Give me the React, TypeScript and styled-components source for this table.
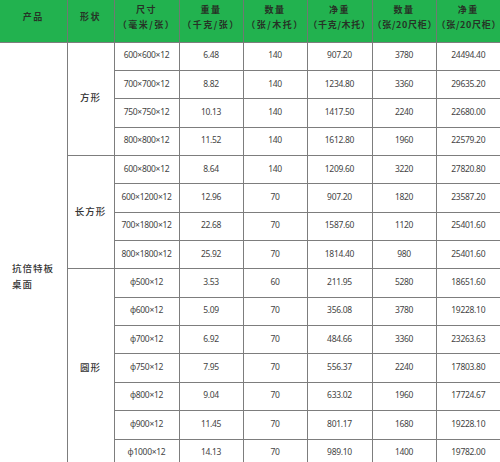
import React from 'react'
import styled, { createGlobalStyle } from 'styled-components'

const GlobalStyle = createGlobalStyle`
  html, body {
    margin: 0;
    padding: 0;
    background: #ffffff;
  }
  body {
    font-family: "Noto Sans", "Noto Sans CJK SC", sans-serif;
  }
`

type Row = [string, string, string, string, string, string]

interface Group {
  shape: string
  rows: Row[]
}

const headers: { top: string; bottom?: string }[] = [
  { top: '产品' },
  { top: '形状' },
  { top: '尺寸', bottom: '（毫米/张）' },
  { top: '重量', bottom: '（千克/张）' },
  { top: '数量', bottom: '（张/木托）' },
  { top: '净重', bottom: '（千克/木托）' },
  { top: '数量', bottom: '（张/20尺柜）' },
  { top: '净重', bottom: '（张/20尺柜）' },
]

const groups: Group[] = [
  {
    shape: '方形',
    rows: [
      ['600×600×12', '6.48', '140', '907.20', '3780', '24494.40'],
      ['700×700×12', '8.82', '140', '1234.80', '3360', '29635.20'],
      ['750×750×12', '10.13', '140', '1417.50', '2240', '22680.00'],
      ['800×800×12', '11.52', '140', '1612.80', '1960', '22579.20'],
    ],
  },
  {
    shape: '长方形',
    rows: [
      ['600×800×12', '8.64', '140', '1209.60', '3220', '27820.80'],
      ['600×1200×12', '12.96', '70', '907.20', '1820', '23587.20'],
      ['700×1800×12', '22.68', '70', '1587.60', '1120', '25401.60'],
      ['800×1800×12', '25.92', '70', '1814.40', '980', '25401.60'],
    ],
  },
  {
    shape: '圆形',
    rows: [
      ['φ500×12', '3.53', '60', '211.95', '5280', '18651.60'],
      ['φ600×12', '5.09', '70', '356.08', '3780', '19228.10'],
      ['φ700×12', '6.92', '70', '484.66', '3360', '23263.63'],
      ['φ750×12', '7.95', '70', '556.37', '2240', '17803.80'],
      ['φ800×12', '9.04', '70', '633.02', '1960', '17724.67'],
      ['φ900×12', '11.45', '70', '801.17', '1680', '19228.10'],
      ['φ1000×12', '14.13', '70', '989.10', '1400', '19782.00'],
    ],
  },
]

const colWidths = [67, 47, 65, 64, 64, 65, 64, 64]
const totalRows = groups.reduce((n, g) => n + g.rows.length, 0)

const App: React.FC = () => {
  return (
    <>
      <GlobalStyle />
      <Page>
        <Table>
          <colgroup>
            {colWidths.map((w, i) => (
              <col key={i} style={{ width: w }} />
            ))}
          </colgroup>
          <thead>
            <HeadRow>
              {headers.map((h, i) => (
                <HeadCell key={i} $last={i === headers.length - 1}>
                  <HeadLine>{h.top}</HeadLine>
                  {h.bottom && <HeadLine $tight={h.bottom.length >= 7}>{h.bottom}</HeadLine>}
                </HeadCell>
              ))}
            </HeadRow>
          </thead>
          <tbody>
            {groups.map((g, gi) =>
              g.rows.map((r, ri) => (
                <BodyRow key={`${gi}-${ri}`}>
                  {gi === 0 && ri === 0 && (
                    <ProductCell rowSpan={totalRows}>
                      抗倍特板
                      <br />
                      桌面
                    </ProductCell>
                  )}
                  {ri === 0 && <ShapeCell rowSpan={g.rows.length}>{g.shape}</ShapeCell>}
                  {r.map((v, ci) => (
                    <Cell key={ci} $last={ci === r.length - 1}>
                      {v}
                    </Cell>
                  ))}
                </BodyRow>
              ))
            )}
          </tbody>
        </Table>
      </Page>
    </>
  )
}

export default App

const Page = styled.div`
  width: 500px;
  height: 462px;
  overflow: hidden;
`

const Table = styled.table`
  width: 500px;
  table-layout: fixed;
  border-collapse: collapse;
  border-spacing: 0;
`

const HeadRow = styled.tr`
  height: 42px;
  background: #22b24f;
`

const HeadCell = styled.th<{ $last?: boolean }>`
  padding: 0 0 8px 0;
  border-right: ${(p) => (p.$last ? 'none' : '1px solid #6f7a72')};
  border-bottom: 1px solid #7d7d7d;
  vertical-align: middle;
  text-align: center;
  font-family: "Noto Sans CJK SC", sans-serif;
  font-size: 9px;
  font-weight: 700;
  line-height: 15px;
  color: #263326;
  white-space: nowrap;
`

const HeadLine = styled.span<{ $tight?: boolean }>`
  display: block;
  letter-spacing: ${(p) => (p.$tight ? '0.7px' : '1.5px')};
`

const BodyRow = styled.tr`
  height: 28.36px;
`

const Cell = styled.td<{ $last?: boolean }>`
  padding: 0 0 3px 0;
  border-right: ${(p) => (p.$last ? 'none' : '1px solid #7d7d7d')};
  border-bottom: 1px solid #7d7d7d;
  text-align: center;
  vertical-align: middle;
  font-family: "Noto Sans", sans-serif;
  font-size: 8.5px;
  letter-spacing: -0.3px;
  color: #444444;
  white-space: nowrap;
`

const ShapeCell = styled.td`
  padding: 0 0 3px 0;
  border-right: 1px solid #7d7d7d;
  border-bottom: 1px solid #7d7d7d;
  text-align: center;
  vertical-align: middle;
  font-family: "Noto Sans CJK SC", sans-serif;
  font-size: 9.5px;
  font-weight: 500;
  letter-spacing: 1px;
  color: #333333;
`

const ProductCell = styled.td`
  padding: 42px 0 0 12px;
  border-right: 1px solid #7d7d7d;
  text-align: left;
  vertical-align: middle;
  font-family: "Noto Sans CJK SC", sans-serif;
  font-size: 9.5px;
  font-weight: 500;
  line-height: 16px;
  letter-spacing: 1px;
  color: #333333;
`
